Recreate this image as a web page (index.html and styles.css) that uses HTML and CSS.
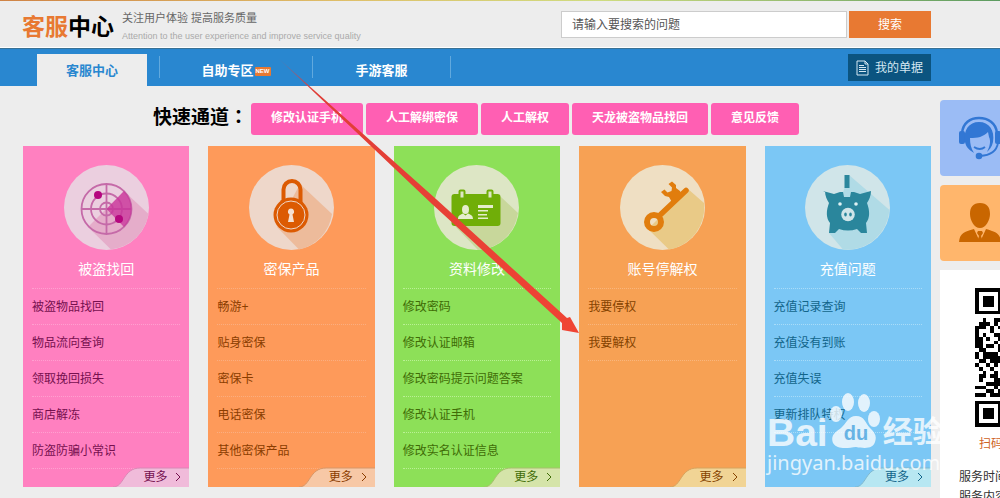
FILE: index.html
```html
<!DOCTYPE html>
<html lang="zh-CN">
<head>
<meta charset="utf-8">
<title>客服中心</title>
<link rel="stylesheet" href="styles.css">
</head>
<body>
<div class="strip"></div>
<header class="header">
  <h1 class="brand"><span class="brand-accent">客服</span>中心</h1>
  <div class="tagline">
    <p class="tagline-cn">关注用户体验 提高服务质量</p>
    <p class="tagline-en">Attention to the user experience and improve service quality</p>
  </div>
  <form class="search">
    <input class="search-input" type="text" aria-label="搜索问题" placeholder="请输入要搜索的问题">
    <button class="search-button" type="button">搜索</button>
  </form>
</header>
<nav class="nav">
  <a class="tab tab-active" href="#">客服中心</a>
  <a class="tab tab-wide" href="#">自助专区<span class="new">NEW</span></a>
  <a class="tab tab-game" href="#">手游客服</a>
  <a class="bills" href="#">
    <svg width="13" height="16" viewBox="0 0 13 16" fill="none" stroke="#d5e8f2"><path d="M1 1h8l3 3v11H1zM9 1v3h3M3 5.500h5M3 7.500h7M3 9.500h7M3 11.500h7"/></svg>
    我的单据
  </a>
</nav>
<div class="page">
  <main class="main">
    <section class="quick">
      <h2 class="quick-title">快速通道<span class="colon" lang="zh-TW">：</span></h2>
      <a class="quick-link" href="#">修改认证手机</a>
      <a class="quick-link" href="#">人工解绑密保</a>
      <a class="quick-link" href="#">人工解权</a>
      <a class="quick-link" href="#">天龙被盗物品找回</a>
      <a class="quick-link" href="#">意见反馈</a>
    </section>
    <div class="cards">
      <section class="card pink">
        <svg class="card-icon" viewBox="0 0 85 85">
          <circle cx="42.500" cy="42.500" r="42.500" fill="#ebcfdf"/>
          <path d="M60 26L84.500 49A42.500 42.500 0 0 1 47 84.500L24 62z" fill="#e5adca"/>
          <g fill="none" stroke="#c56aa8" stroke-width="1.800"><circle cx="42.500" cy="44" r="25"/><circle cx="42.500" cy="44" r="15.500"/><circle cx="42.500" cy="44" r="6.500"/><path d="M17 44h51M42.500 19v50"/></g>
          <path d="M42.500 44L60 26A25 25 0 0 1 60 62z" fill="#c8329a" opacity=".75"/>
          <circle cx="34" cy="30" r="4" fill="#b5077f"/><circle cx="55" cy="54" r="4" fill="#b5077f"/>
        </svg>
        <h3 class="card-title">被盗找回</h3>
        <ul class="list"><li><a href="#">被盗物品找回</a></li><li><a href="#">物品流向查询</a></li><li><a href="#">领取挽回损失</a></li><li><a href="#">商店解冻</a></li><li><a href="#">防盗防骗小常识</a></li></ul>
        <a class="more" href="#"><svg class="more-bg" viewBox="0 0 78 20" preserveAspectRatio="none"><path class="more-fill" d="M0 20C12 20 10 1 28 1H78V20z"/><path class="more-edge" d="M0 20C12 20 10 1 28 1H78"/></svg><span>更多</span><svg class="chevron" viewBox="0 0 6 10"><path d="M1 1l4 4-4 4"/></svg></a>
      </section>
      <section class="card orange">
        <svg class="card-icon" viewBox="0 0 85 85">
          <circle cx="42.500" cy="42.500" r="42.500" fill="#eed7ca"/>
          <path d="M51 19L83 49A42.500 42.500 0 0 1 50 84.500L28 62z" fill="#edbb9b"/>
          <path d="M34.500 38V24.500a8.500 8.500 0 0 1 17 0V38" fill="none" stroke="#dc5a02" stroke-width="4"/>
          <circle cx="42" cy="50" r="17.500" fill="#dc5a02"/><circle cx="42" cy="50" r="14" fill="none" stroke="#eed7ca" stroke-width="1"/>
          <path d="M42 43.500a3.200 3.200 0 0 1 1.500 6L45 57h-6l1.500-7.500a3.200 3.200 0 0 1 1.500-6z" fill="#f5dfd0"/>
        </svg>
        <h3 class="card-title">密保产品</h3>
        <ul class="list"><li><a href="#">畅游+</a></li><li><a href="#">贴身密保</a></li><li><a href="#">密保卡</a></li><li><a href="#">电话密保</a></li><li><a href="#">其他密保产品</a></li></ul>
        <a class="more" href="#"><svg class="more-bg" viewBox="0 0 78 20" preserveAspectRatio="none"><path class="more-fill" d="M0 20C12 20 10 1 28 1H78V20z"/><path class="more-edge" d="M0 20C12 20 10 1 28 1H78"/></svg><span>更多</span><svg class="chevron" viewBox="0 0 6 10"><path d="M1 1l4 4-4 4"/></svg></a>
      </section>
      <section class="card green">
        <svg class="card-icon" viewBox="0 0 85 85">
          <circle cx="42.500" cy="42.500" r="42.500" fill="#dde6c5"/>
          <path d="M67 32L84 48A42.500 42.500 0 0 1 44 85L20 60z" fill="#c8d79b"/>
          <rect x="17.500" y="29" width="49" height="32" rx="3" fill="#70ae08"/>
          <g fill="#dde6c5" stroke="#70ae08" stroke-width="2"><rect x="25.500" y="25.500" width="5" height="8" rx="1"/><rect x="53.500" y="25.500" width="5" height="8" rx="1"/></g>
          <ellipse cx="31.500" cy="44.500" rx="3.500" ry="4.500" fill="#e5edcd"/>
          <path d="M24 54c0-4 3-4.500 5-5.500l2.500 2 2.500-2c2 1 5 1.500 5 5.500zM44 40h15v3H44zm0 5h10v1.500H44zm0 4h9v1.500h-9zm0 3.500h10V54H44z" fill="#e5edcd"/>
        </svg>
        <h3 class="card-title">资料修改</h3>
        <ul class="list"><li><a href="#">修改密码</a></li><li><a href="#">修改认证邮箱</a></li><li><a href="#">修改密码提示问题答案</a></li><li><a href="#">修改认证手机</a></li><li><a href="#">修改实名认证信息</a></li></ul>
        <a class="more" href="#"><svg class="more-bg" viewBox="0 0 78 20" preserveAspectRatio="none"><path class="more-fill" d="M0 20C12 20 10 1 28 1H78V20z"/><path class="more-edge" d="M0 20C12 20 10 1 28 1H78"/></svg><span>更多</span><svg class="chevron" viewBox="0 0 6 10"><path d="M1 1l4 4-4 4"/></svg></a>
      </section>
      <section class="card amber">
        <svg class="card-icon" viewBox="0 0 85 85">
          <circle cx="42.500" cy="42.500" r="42.500" fill="#efdfc3"/>
          <path d="M68 24L84 38A42.500 42.500 0 0 1 49 84.500L28 64z" fill="#e9ca87"/>
          <circle cx="34" cy="57" r="7" fill="none" stroke="#e17d0d" stroke-width="6"/>
          <path d="M39 51L66 25.500" stroke="#e17d0d" stroke-width="5.500" stroke-linecap="round"/>
          <path d="M53 39L49 32L45 31L41 27L44.500 24.500L47.500 27.500L51.500 26L52 22.500L48.500 19L52 16.500L56 20L56 23L60 26L62 30z" fill="#e17d0d"/>
        </svg>
        <h3 class="card-title">账号停解权</h3>
        <ul class="list"><li><a href="#">我要停权</a></li><li><a href="#">我要解权</a></li></ul>
        <a class="more" href="#"><svg class="more-bg" viewBox="0 0 78 20" preserveAspectRatio="none"><path class="more-fill" d="M0 20C12 20 10 1 28 1H78V20z"/><path class="more-edge" d="M0 20C12 20 10 1 28 1H78"/></svg><span>更多</span><svg class="chevron" viewBox="0 0 6 10"><path d="M1 1l4 4-4 4"/></svg></a>
      </section>
      <section class="card blue">
        <svg class="card-icon" viewBox="0 0 85 85">
          <circle cx="42.500" cy="42.500" r="42.500" fill="#d0e5e9"/>
          <path d="M44 10L84.500 45A42.500 42.500 0 0 1 38 84.500L24 68z" fill="#b0dbe6"/>
          <path d="M39.500 10h5v13h-5zM18 26l11 3 6-2h3l1 5h6l1-5h3l6 2 11-3c0 5-2 9-4 12 3 8 3 15-1 20l1 10h-6l-4-4q-9 3-18 0l-4 4h-6l1-10c-4-5-4-12-1-20-2-3-4-7-4-12z" fill="#2a869c"/>
          <circle cx="35" cy="39" r="1.800" fill="#dff2f4"/><circle cx="51" cy="39" r="1.800" fill="#dff2f4"/>
          <circle cx="43" cy="49.500" r="6.800" fill="#d0e5e9"/><ellipse cx="40.500" cy="49.500" rx="1.300" ry="2" fill="#2a869c"/><ellipse cx="45.500" cy="49.500" rx="1.300" ry="2" fill="#2a869c"/>
        </svg>
        <h3 class="card-title">充值问题</h3>
        <ul class="list"><li><a href="#">充值记录查询</a></li><li><a href="#">充值没有到账</a></li><li><a href="#">充值失误</a></li><li><a href="#">更新排队特权</a></li></ul>
        <a class="more" href="#"><svg class="more-bg" viewBox="0 0 78 20" preserveAspectRatio="none"><path class="more-fill" d="M0 20C12 20 10 1 28 1H78V20z"/><path class="more-edge" d="M0 20C12 20 10 1 28 1H78"/></svg><span>更多</span><svg class="chevron" viewBox="0 0 6 10"><path d="M1 1l4 4-4 4"/></svg></a>
      </section>
    </div>
  </main>
  <aside class="sidebar">
    <a class="side-box side-service" href="#" aria-label="在线客服">
      <svg width="42" height="44" viewBox="0 0 42 44">
        <path d="M3 17C4 7 11 2 20 2s17 5 18 15" fill="none" stroke="#3277d4" stroke-width="2.500"/>
        <rect y="15" width="6" height="13" rx="2" fill="#3277d4"/><rect x="36" y="15" width="6" height="13" rx="2" fill="#3277d4"/>
        <path d="M6 26C4 14 10 6 20 6s16 8 14 20c-1 5-4 8-6 10 3-6 4-11 2-15l-1-5c-5 5-10 6-18 6 0 6 1 10 4 15-5-3-8-6-9-11z" fill="#3277d4"/>
        <path d="M15 31q6 4 11 0M39 27q-2 12-18 13" fill="none" stroke="#3277d4" stroke-width="1.800"/><circle cx="20" cy="40" r="3.300" fill="#3277d4"/>
      </svg>
    </a>
    <a class="side-box side-agent" href="#" aria-label="客服专员">
      <svg width="42" height="40" viewBox="0 0 42 40" fill="#c96600">
        <path d="M21 0c7 0 10 4 10 11 0 6-4 14-10 14S11 17 11 11C11 4 14 0 21 0zM0 39c1-9 5-10 15-13l6 13 6-13c10 3 14 4 15 13z"/><path d="M19 28h4l1 2-2 3 2 6h-6l2-6-2-3z"/>
      </svg>
    </a>
    <section class="side-info">
      <svg class="qr" viewBox="0 0 37 37" shape-rendering="crispEdges">
        <path fill="#000" d="M0 0h7v7H0zM0 30h7v7H0zM30 0h7v7h-7z"/>
        <path fill="#fff" d="M1 1h5v5H1zM1 31h5v5H1zM31 1h5v5h-5z"/>
        <path fill="#000" d="M2 2h3v3H2zM2 32h3v3H2zM32 2h3v3h-3z"/>
        <path stroke="#000" d="M2 8.500h1M5 8.500h2M1 9.500h3M5 9.500h1M0 10.500h3M4 10.500h1M6 10.500h1M0 11.500h1M4 11.500h1M0 12.500h1M2 12.500h1M5 12.500h2M0 13.500h2M3 13.500h1M6 13.500h1M0 14.500h2M5 14.500h1M0 15.500h2M3 15.500h2M6 15.500h1M1 16.500h2M6 16.500h1M0 17.500h1M2 17.500h4M0 18.500h1M2 18.500h5M1 19.500h2M4 19.500h3M0 20.500h1M3 20.500h1M5 20.500h1M1 21.500h1M4 21.500h1M2 22.500h1M5 22.500h1M1 23.500h2M4 23.500h2M1 24.500h1M5 24.500h2M3 25.500h4M0 26.500h3M5 26.500h1M3 27.500h2M6 27.500h1M0 28.500h3M4 28.500h3"/>
      </svg>
      <p class="scan">扫码关注</p>
      <p class="info">服务时间：</p>
      <p class="info">服务内容：</p>
    </section>
  </aside>
</div>
<svg class="arrow" width="303" height="278" viewBox="0 0 303 278"><defs><linearGradient id="fade" x1="0" y1="0" x2="1" y2="1"><stop offset="0" stop-color="#e84038" stop-opacity=".2"/><stop offset=".12" stop-color="#df3d37"/><stop offset="1" stop-color="#f04434"/></linearGradient></defs><path d="M0 0L158 141L289 260L292 259L301 275L284 272L284 265L154 146z" fill="url(#fade)"/></svg>
<div class="watermark">
  <div class="wm-top"><span class="wm-bai">Bai</span><span class="wm-paw"><svg width="50" height="56" viewBox="0 0 50 56" fill="#fff"><ellipse cx="6" cy="21" rx="6" ry="8"/><ellipse cx="18" cy="9" rx="6" ry="9"/><ellipse cx="34" cy="10" rx="6" ry="9"/><ellipse cx="44" cy="26" rx="6" ry="8"/><path d="M26 23c9 0 9 7 14 12s7 8 5 14-8 7-19 5c-8 1-19 3-23-4-3-8 3-11 8-15s7-12 15-12z"/></svg><b class="wm-du">du</b></span><span class="wm-cn">经验</span></div>
  <div class="wm-url">jingyan.baidu.com</div>
</div>
</body>
</html>
```
FILE: styles.css
```css
* { box-sizing: border-box; }
html { height: 100%; overflow: hidden; }
body {
  display: flex;
  flex-direction: column;
  position: relative;
  height: 100%;
  margin: 0;
  overflow: hidden;
  background: #ededed;
  font: 12px/16px "Liberation Sans", "Noto Sans CJK SC", sans-serif;
}
h1, h2, h3, p, ul { margin: 0; padding: 0; font-weight: normal; }
a { color: inherit; text-decoration: none; }
.strip { flex: none; height: 1px; background: linear-gradient(90deg, #cf8345, #dfc06a 35%, #cfdc80 60%, #5c9b60); }
.header { display: flex; flex: none; height: 47px; padding: 0 69px 0 22px; border-bottom: 1px solid #fff; }
.brand { padding-top: 9px; font-size: 23px; line-height: 34px; font-weight: bold; }
.brand-accent { color: #e87932; }
.tagline { padding: 9px 0 0 8px; }
.tagline-cn { color: #666; font-size: 11px; line-height: 17px; }
.tagline-en { color: #aaa; font-size: 9px; line-height: 18px; }
.search { display: flex; gap: 2px; margin-left: auto; padding-top: 10px; }
.search-input { width: 286px; height: 27px; padding: 0 10px; border: 1px solid #ccc; background: #fff; color: #444; font: inherit; }
.search-input::placeholder { color: #555; opacity: 1; }
.search-button { width: 82px; height: 27px; border: 0; background: #e87932; color: #fff; font: inherit; }
.nav {
  display: flex;
  flex: none;
  align-items: flex-end;
  height: 38px;
  padding: 0 69px 0 37px;
  border-top: 1px solid #3b7295;
  background: #2987d0;
  color: #fff;
}
.tab { display: flex; align-items: center; justify-content: center; height: 22px; margin-bottom: 8px; padding-top: 8px; border-right: 1px solid #61a9de; font-size: 13px; font-weight: bold; }
.tab-active { width: 110px; height: 32px; margin: 0 12px 0 0; padding-top: 2px; border: 0; background: #ededed; color: #2987d0; }
.tab-wide { width: 154px; border-left: 1px solid #61a9de; }
.tab-game { width: 138px; }
.new { margin-left: 1px; padding: 0 1px; border-radius: 1px; background: #e87932; font-size: 6px; line-height: 9px; }
.bills { display: flex; align-items: center; gap: 6px; height: 27px; margin: 0 0 5px auto; padding: 0 8px; background: #0b5480; color: #d5e8f2; }
.page { display: flex; flex: 1; min-height: 0; overflow: hidden; }
.main { flex: 1; min-width: 0; padding: 17px 9px 0 23px; }
.quick { display: flex; gap: 3px; padding-left: 130px; }
.quick-title { width: 95px; font-size: 19px; line-height: 26px; font-weight: bold; white-space: nowrap; }
.colon { font-family: "Noto Sans CJK TC", sans-serif; }
.quick-link { padding: 7px 20px 9px; border-radius: 3px; background: #ff5fb3; color: #fff; font-weight: bold; white-space: nowrap; }
.cards { display: grid; grid-template-columns: repeat(5, 1fr); gap: 19px; margin-top: 11px; }
.card { position: relative; min-height: 341px; padding: 19px 9px 0; }
.card-icon { display: block; width: 85px; height: 85px; margin: 0 auto; }
.card-title { height: 38px; padding-top: 9px; color: #fff; font-size: 14px; line-height: 20px; text-align: center; }
.list { list-style: none; border-top: 1px dotted var(--line); }
.list li { height: 36px; border-bottom: 1px dotted var(--line); line-height: 36px; }
.more { position: absolute; right: 0; bottom: 0; display: flex; align-items: center; justify-content: flex-end; gap: 8px; width: 76px; height: 20px; padding-right: 8px; }
.more-bg { position: absolute; inset: 0; width: 100%; height: 100%; }
.more-fill { fill: var(--tab); }
.more-edge { fill: none; stroke: var(--edge); }
.more span, .chevron { position: relative; }
.chevron { width: 6px; height: 10px; fill: none; stroke: currentColor; }
.pink { --line: #ffa0d0; --tab: #f0bbda; --edge: #d987b5; background: #ff80c0; color: #76104f; }
.orange { --line: #fbae80; --tab: #f7c8a6; --edge: #d69668; background: #fe9a5a; color: #8b3d00; }
.green { --line: #baf095; --tab: #d5e4a9; --edge: #a5bf6c; background: #8de058; color: #3f6c06; }
.amber { --line: #f9b67d; --tab: #f1d495; --edge: #d5a35d; background: #f7a154; color: #854300; }
.blue { --line: #a9dcf8; --tab: #b7e7f2; --edge: #7fb8ce; background: #7bc7f5; color: #12658b; }
.sidebar { display: flex; flex: none; flex-direction: column; gap: 9px; width: 60px; padding-top: 14px; overflow: hidden; }
.side-box { display: flex; flex: none; align-items: center; width: 160px; height: 76px; padding-left: 19px; border-radius: 4px; }
.side-service { background: #9bbcf5; }
.side-agent { background: #ffb66c; }
.side-info { flex: none; width: 160px; padding: 18px 19px; background: #fff; }
.qr { display: block; width: 139px; height: 139px; margin-left: 16px; }
.scan { padding: 8px 0 14px 20px; color: #cf6226; line-height: 18px; }
.info { color: #333; line-height: 20px; }
.arrow { position: absolute; left: 278px; top: 58px; pointer-events: none; }
.watermark { position: absolute; left: 767px; top: 391px; color: #fff; opacity: .78; pointer-events: none; }
.wm-top { display: flex; align-items: flex-end; height: 58px; }
.wm-bai { font-size: 39px; font-weight: bold; line-height: 32px; }
.wm-paw { position: relative; width: 50px; height: 56px; margin-left: 2px; }
.wm-du { position: absolute; left: 14px; top: 28px; color: #62aee0; font-size: 20px; line-height: 24px; }
.wm-cn { padding-left: 3px; font-size: 30px; font-weight: bold; line-height: 34px; }
.wm-url { font: 20px/28px "Noto Sans", sans-serif; }
```
